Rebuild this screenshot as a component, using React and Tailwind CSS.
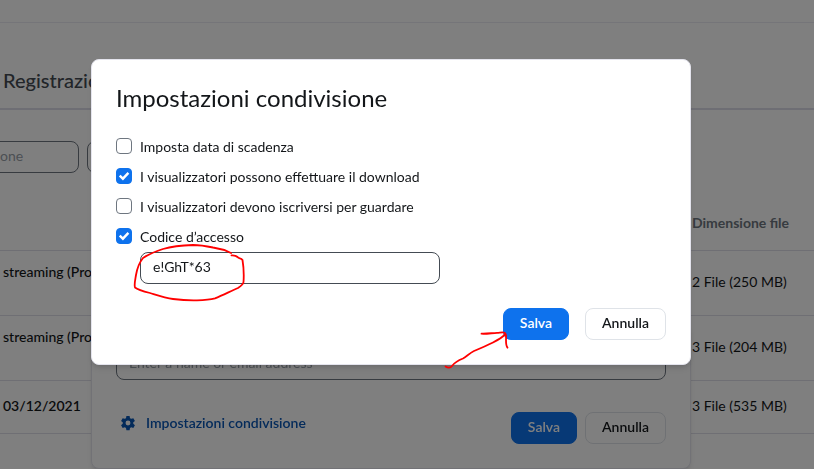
import React, { useState } from "react";

const recordings = [
  { id: 1, topic: "streaming (Pro", size: "2 File (250 MB)" },
  { id: 2, topic: "streaming (Pro", size: "3 File (204 MB)" },
  { id: 3, date: "03/12/2021", size: "3 File (535 MB)" },
];

function RecordingsPage() {
  return (
    <div>
      <header className="h-[23px] border-b border-[#ebebf2]" />
      <nav className="border-b-2 border-[#dcdce8] px-[3px] pt-[43px] pb-[14px]">
        <a href="#registrazioni" className="block text-xl leading-7 font-medium text-[#444b53]">
          Registrazioni
        </a>
      </nav>

      {/* Filters */}
      <div className="mt-[31px] flex gap-2">
        <input
          type="text"
          aria-label="Cerca"
          placeholder="one"
          className="-ml-4 h-8 w-[95px] rounded-lg border border-[#6e7680] pb-[3px] pl-[15px] text-sm placeholder:text-[#98a0a9]"
        />
        <input
          type="text"
          aria-label="Filtro"
          className="h-8 w-60 rounded-lg border border-[#6e7680] px-3 text-sm"
        />
      </div>

      <table className="mt-7 w-full text-left text-sm leading-5">
        <thead>
          <tr className="border-b border-[#dfdfe8] text-[#6e7680]">
            <th className="h-[49px] pb-1" />
            <th className="h-[49px] w-[122px] pb-1 font-bold">Dimensione file</th>
          </tr>
        </thead>
        <tbody>
          {recordings.map((rec) => (
            <tr key={rec.id} className="border-b border-[#dfdfe8]">
              {rec.topic ? (
                <td className="h-[65px] pb-[22px] pl-[3px] font-medium">{rec.topic}</td>
              ) : (
                <td className="h-[53px] pb-[2px] pl-[3px] font-semibold">{rec.date}</td>
              )}
              <td className="pb-[2px]">{rec.size}</td>
            </tr>
          ))}
        </tbody>
      </table>
    </div>
  );
}

function GearIcon() {
  return (
    <svg viewBox="0 0 24 24" className="size-4" fill="currentColor" aria-hidden="true">
      <path
        fillRule="evenodd"
        d="M9.6 1.500h4.800l.6 3.200 1.900 1.100 3.100-1.100 2.400 4.200-2.500 2.100v2.200l2.500 2.100-2.400 4.200-3.100-1.100-1.900 1.100-.6 3.200H9.600L9 19.500l-1.900-1.100L4 19.500l-2.400-4.200 2.500-2.100V11L1.600 8.900 4 4.700l3.100 1.100L9 4.700zM12 8.300a3.700 3.700 0 1 0 0 7.400 3.700 3.700 0 0 0 0-7.400z"
      />
    </svg>
  );
}

function DialogButton({ primary, children }) {
  return (
    <button
      type="button"
      className={
        primary
          ? "h-8 rounded-lg border border-[#0e72ed] bg-[#0e72ed] px-4 pb-[2px] text-sm font-semibold text-white"
          : "h-8 rounded-lg border border-[#dfe3e8] bg-white px-4 pb-[2px] text-sm font-semibold text-[#131619]"
      }
    >
      {children}
    </button>
  );
}

function ShareDialog() {
  return (
    <div className="fixed inset-x-0 top-0 flex justify-center pt-[323px] pr-8">
      <div className="w-full max-w-[600px] rounded-lg border border-[#e4e4ed] bg-white p-6 shadow-md">
        <input
          type="text"
          aria-label="Enter a name or email address"
          placeholder="Enter a name or email address"
          className="h-8 w-full rounded-lg border border-[#6e7680] px-3 pb-[3px] text-sm placeholder:text-[#98a0a9]"
        />
        <div className="mt-8 flex items-center justify-between">
          <a
            href="#condivisione"
            className="flex items-center gap-[10px] pb-[10px] pl-1 text-sm font-semibold text-[#0956b5]"
          >
            <GearIcon />
            Impostazioni condivisione
          </a>
          <div className="flex gap-2">
            <DialogButton primary>Salva</DialogButton>
            <DialogButton>Annulla</DialogButton>
          </div>
        </div>
      </div>
    </div>
  );
}

function Checkbox({ label, checked, onChange }) {
  return (
    <label className="flex h-5 items-center gap-2 text-sm leading-5">
      <span className="grid size-4 shrink-0">
        <input
          type="checkbox"
          checked={checked}
          onChange={onChange}
          className="peer col-start-1 row-start-1 size-4 appearance-none rounded border border-[#6e7680] bg-white checked:border-[#0e72ed] checked:bg-[#0e72ed]"
        />
        <svg
          viewBox="0 0 16 16"
          className="pointer-events-none invisible col-start-1 row-start-1 size-4 peer-checked:visible"
          fill="none"
          stroke="white"
          strokeWidth="2.4"
          aria-hidden="true"
        >
          <path d="M3.700 7.700l3.200 3 5.500-5.800" />
        </svg>
      </span>
      <span className="pt-[2px]">{label}</span>
    </label>
  );
}

function SettingsDialog() {
  const [expires, setExpires] = useState(false);
  const [download, setDownload] = useState(true);
  const [register, setRegister] = useState(false);
  const [protect, setProtect] = useState(true);
  const [passcode, setPasscode] = useState("e!GhT*63");

  return (
    <div className="fixed inset-0 flex items-start justify-center bg-black/50 pt-[59px] pr-8">
      <div
        role="dialog"
        aria-labelledby="settings-title"
        className="w-full max-w-[600px] rounded-lg border border-[#e4e4ed] bg-white p-6 text-[#131619] shadow-md"
      >
        <h2 id="settings-title" className="text-2xl leading-7">
          Impostazioni condivisione
        </h2>

        <div className="mt-6 flex flex-col gap-[10px]">
          <Checkbox
            label="Imposta data di scadenza"
            checked={expires}
            onChange={() => setExpires(!expires)}
          />
          <Checkbox
            label="I visualizzatori possono effettuare il download"
            checked={download}
            onChange={() => setDownload(!download)}
          />
          <Checkbox
            label="I visualizzatori devono iscriversi per guardare"
            checked={register}
            onChange={() => setRegister(!register)}
          />
          <Checkbox
            label="Codice d’accesso"
            checked={protect}
            onChange={() => setProtect(!protect)}
          />
        </div>

        <div className="relative mt-[6px] ml-6 max-w-[300px]">
          <input
            type="text"
            aria-label="Codice d’accesso"
            value={passcode}
            onChange={(e) => setPasscode(e.target.value)}
            className="block h-8 w-full rounded-lg border border-[#444b53] px-3 pb-[3px] text-sm"
          />
          {/* Hand drawn circle round the passcode */}
          <svg
            viewBox="130 240 120 65"
            className="pointer-events-none absolute -top-3 -left-[10px] h-[65px] w-[120px]"
            fill="none"
            stroke="#ff0000"
            strokeWidth="1.8"
            strokeLinecap="round"
            strokeLinejoin="round"
            aria-hidden="true"
          >
            <path d="M231 253C225 250 220 248.500 213 247.500C206 246 200 245 193 245C180 245.500 170 247 163 249C155 251.500 149 254 143 258C139 263 137 269 136 275C135 281 134 285 135 287.500C138 290 144 291.500 150 293C158 295.500 165 298 173 299C181 300 189 300.500 197 300.300C204 300 210 299.500 215 298.300C223 295 231 291 238 288C241 286 243.500 284 243.500 282C244 275 243.500 266 242.500 260C241 257.500 239 259 237.500 257C235.500 255 233 255.500 231.500 255.300" />
          </svg>
        </div>

        <div className="mt-6 flex justify-end gap-4">
          <div className="relative">
            <DialogButton primary>Salva</DialogButton>
            {/* Hand drawn arrow to the save button */}
            <svg
              viewBox="443 328 70 44"
              className="pointer-events-none absolute top-5 -left-[60px] h-11 w-[70px]"
              fill="none"
              stroke="#ff0000"
              strokeWidth="1.8"
              strokeLinecap="round"
              strokeLinejoin="round"
              aria-hidden="true"
            >
              <path d="M445.500 366.500C448 368 450.500 368 452 366C455 362 459 360 463 358.500C467 356 470 353 474 351C480 348.500 487 345.500 493 342.500C498 340 502 337.500 505 334.500" />
              <path d="M481.500 333.700C487 334 492 333 497 332.800C500 332.700 503 332 504.500 332.700C507 334 506 337 506 340C506 343 506 346 507.500 347.700" />
            </svg>
          </div>
          <DialogButton>Annulla</DialogButton>
        </div>
      </div>
    </div>
  );
}

function App() {
  return (
    <div className="min-h-screen overflow-hidden bg-white font-['Lato','Liberation_Sans',sans-serif] text-[#131619]">
      <RecordingsPage />
      <ShareDialog />
      <SettingsDialog />
    </div>
  );
}

export default App;
